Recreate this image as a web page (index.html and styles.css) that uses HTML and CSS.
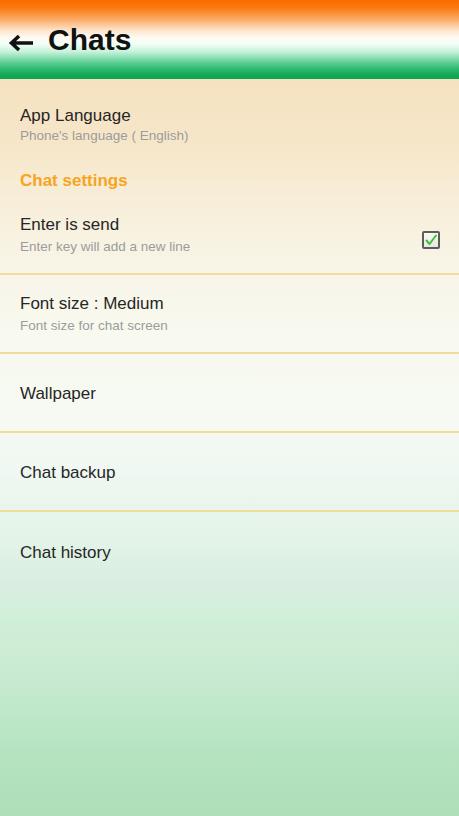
FILE: index.html
```html
<!DOCTYPE html>
<html>
<head>
<meta charset="utf-8">
<link rel="stylesheet" href="styles.css">
</head>
<body>
<div class="screen">
  <header class="topbar">
    <svg class="back" width="26" height="18" viewBox="0 0 26 18">
      <path d="M25 9 H4 M11 2 L3.5 9 L11 16" fill="none" stroke="#111" stroke-width="3.6" stroke-linecap="butt" stroke-linejoin="miter"/>
    </svg>
    <h1 class="title">Chats</h1>
  </header>
  <main class="content">
    <div class="lang">
      <div class="item-title">App Language</div>
      <div class="item-sub sub-tight">Phone's language ( English)</div>
    </div>
    <div class="section">Chat settings</div>
    <div class="rows">
      <div class="row">
        <div class="text">
          <div class="item-title">Enter is send</div>
          <div class="item-sub">Enter key will add a new line</div>
        </div>
        <div class="checkbox">
          <svg width="14" height="14" viewBox="0 0 14 14"><path d="M2.5 7.5 L5.5 11 L12 2.5" fill="none" stroke="#3fc23a" stroke-width="2" stroke-linecap="round" stroke-linejoin="round"/></svg>
        </div>
      </div>
      <div class="row">
        <div class="text">
          <div class="item-title">Font size : Medium</div>
          <div class="item-sub">Font size for chat screen</div>
        </div>
      </div>
      <div class="row">
        <div class="text"><div class="item-title">Wallpaper</div></div>
      </div>
      <div class="row">
        <div class="text"><div class="item-title">Chat backup</div></div>
      </div>
      <div class="row last">
        <div class="text"><div class="item-title">Chat history</div></div>
      </div>
    </div>
  </main>
</div>
</body>
</html>
```
FILE: styles.css
```css
html, body {
  margin: 0;
  padding: 0;
}
body {
  width: 459px;
  height: 816px;
  overflow: hidden;
  font-family: "Liberation Sans", Arial, sans-serif;
  background: linear-gradient(to bottom,
    #f5e2bf 0px, #f5e2bf 79px, #f6e7ca 150px, #f7eed9 200px, #f8f4e6 260px,
    #f8f9ef 330px, #f6faf2 420px, #eff8f2 470px, #e5f4e9 530px, #d9eee1 585px,
    #d0efd8 620px, #c8e9d1 680px, #bee8c9 710px, #b4e3c0 760px, #aedfb8 816px);
}
.screen {
  display: flex;
  flex-direction: column;
  height: 816px;
}
.topbar {
  height: 79px;
  box-sizing: border-box;
  display: flex;
  align-items: flex-start;
  padding: 22px 0 0 8px;
  background: linear-gradient(to bottom,
    #f96c00 0px, #fa7a10 8px, #fbae6c 20px, #fde3c8 30px, #fff9f1 37px,
    #f2fff7 44px, #c4f1da 52px, #74d7a3 60px, #33bc75 68px, #12a956 75px, #0ea552 79px);
}
.back {
  margin-top: 12px;
  flex: none;
}
.title {
  margin: 0 0 0 14px;
  font-size: 30px;
  line-height: 35px;
  font-weight: bold;
  color: #111;
}
.content {
  display: flex;
  flex-direction: column;
}
.lang {
  padding: 27px 20px 0;
}
.item-title {
  font-size: 17px;
  line-height: 20px;
  color: #262626;
}
.item-sub {
  font-size: 13.5px;
  line-height: 18px;
  color: #9c9c9c;
  margin-top: 3px;
}
.sub-tight {
  margin-top: 1px;
}
.section {
  margin-top: 26px;
  padding: 0 20px;
  font-size: 17px;
  line-height: 20px;
  font-weight: bold;
  color: #f7a41f;
}
.rows {
  margin-top: 5px;
  display: flex;
  flex-direction: column;
}
.row {
  height: 79px;
  box-sizing: border-box;
  padding: 2px 19px 0 20px;
  border-bottom: 2px solid #f2dc9c;
  display: flex;
  align-items: center;
  justify-content: space-between;
}
.row.last {
  border-bottom: none;
}
.checkbox {
  width: 18px;
  height: 18px;
  box-sizing: border-box;
  margin-top: 8px;
  border: 2px solid #5c5c5c;
  border-radius: 2px;
  background: linear-gradient(to bottom, #fafaf4, #e8e8e0);
  display: flex;
  align-items: center;
  justify-content: center;
}
.checkbox svg {
  display: block;
}
```
